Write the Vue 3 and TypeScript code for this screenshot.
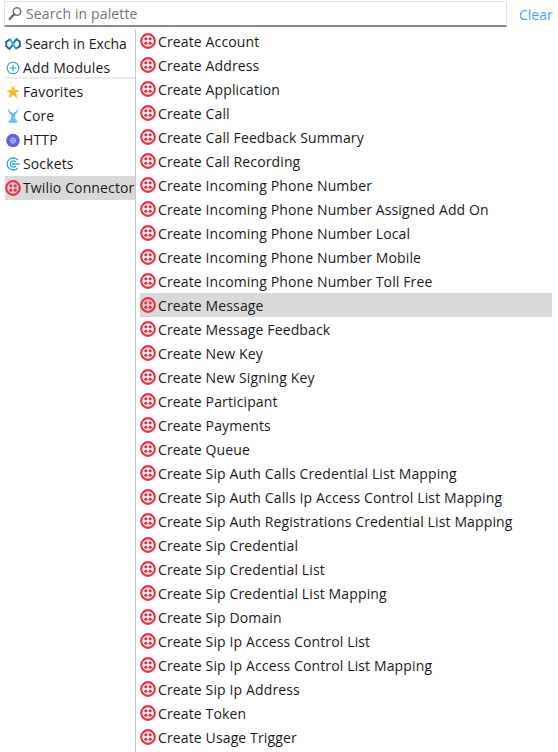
<script setup lang="ts">
const ops: string[] = [
  'Create Account','Create Address','Create Application','Create Call','Create Call Feedback Summary','Create Call Recording',
  'Create Incoming Phone Number','Create Incoming Phone Number Assigned Add On','Create Incoming Phone Number Local','Create Incoming Phone Number Mobile','Create Incoming Phone Number Toll Free',
  'Create Message','Create Message Feedback','Create New Key','Create New Signing Key','Create Participant','Create Payments','Create Queue',
  'Create Sip Auth Calls Credential List Mapping','Create Sip Auth Calls Ip Access Control List Mapping','Create Sip Auth Registrations Credential List Mapping',
  'Create Sip Credential','Create Sip Credential List','Create Sip Credential List Mapping','Create Sip Domain','Create Sip Ip Access Control List','Create Sip Ip Access Control List Mapping','Create Sip Ip Address','Create Token','Create Usage Trigger'
]
</script>

<template>
  <div class="page">
    <header class="top">
      <div class="search">
        <svg class="glass" width="14" height="15" viewBox="0 0 14 15" fill="none">
          <circle cx="9" cy="5.5" r="3.7" stroke="#777" stroke-width="1.6" />
          <path d="M6.2 8.3 1.6 13" stroke="#666" stroke-width="2.2" stroke-linecap="round" />
        </svg>
        <span>Search in palette</span>
      </div>
      <a class="clear">Clear</a>
    </header>
    <div class="body">
      <aside class="side">
        <div class="sgroup">
          <div class="srow exch">
            <svg width="16" height="14" viewBox="0 0 16 14" fill="none">
              <path d="M5.500 2 1.200 4.800v4.400L4.500 12 7.500 8" stroke="#1b6f96" stroke-width="2" stroke-linejoin="round" />
              <path d="M10.500 12l4.300-2.800V4.800L11.500 2 8.500 6" stroke="#1b6f96" stroke-width="2" stroke-linejoin="round" />
              <path d="M5 2l6 10" stroke="#27b5d8" stroke-width="2.200" />
            </svg>
            <span class="clip">Search in Excha</span>
          </div>
          <div class="srow">
            <svg width="14" height="14" viewBox="0 0 14 14" fill="none">
              <circle cx="7" cy="7" r="5.8" stroke="#2f9fe0" stroke-width="1.1" />
              <path d="M7 3.8v6.4M3.8 7h6.4" stroke="#2f9fe0" stroke-width="1.1" />
            </svg>
            <span>Add Modules</span>
          </div>
        </div>
        <div class="sgroup">
          <div class="srow">
            <svg width="14" height="14" viewBox="0 0 14 14"><path d="M7 .4 9 5h5L10 8l1.500 5.400L7 10.300l-4.500 3.100L4 8 0 5h5z" fill="#f8b92b" /></svg>
            <span>Favorites</span>
          </div>
          <div class="srow">
            <svg class="core" width="14" height="16" viewBox="0 0 13 16">
              <path d="M1 0C1.500 4 3.500 6 4.500 7L4.500 10C4 11.500 2.500 13 1.500 13.500 3 15.500 10 15.500 11.500 13.500 10.500 13 9 11.500 8.500 10L8.500 7C9.500 6 11.500 4 12 0 10.500 2.500 8.500 4.500 6.500 5 4.500 4.500 2.500 2.500 1 0z" fill="#62c6ee" />
            </svg>
            <span>Core</span>
          </div>
          <div class="srow">
            <svg width="15" height="15" viewBox="0 0 15 15">
              <circle cx="7.500" cy="7.500" r="7.300" fill="#5f63e6" />
              <circle cx="7.500" cy="7.500" r="2.800" fill="none" stroke="#c5c7f7" stroke-width="1" />
              <path d="M4.700 7.500h5.600M7.500 4.700v5.600" stroke="#c5c7f7" stroke-width=".8" />
            </svg>
            <span>HTTP</span>
          </div>
          <div class="srow">
            <svg width="14" height="14" viewBox="0 0 14 14" fill="none">
              <path d="M11.800 3.200A6 6 0 1 0 11.800 10.800" stroke="#2aa5d8" stroke-width="1.300" />
              <path d="M10 5a3.200 3.200 0 1 0 0 4" stroke="#2aa5d8" stroke-width="1.300" />
              <circle cx="7" cy="7" r="1.100" fill="#2aa5d8" /><path d="M7 7h7" stroke="#2aa5d8" stroke-width="1.200" />
            </svg>
            <span>Sockets</span>
          </div>
          <div class="srow selected twl">
            <svg class="tw" viewBox="0 0 16 16" fill="none">
              <circle cx="8" cy="8" r="6.800" stroke="#f22f46" stroke-width="2.200" />
              <circle cx="5.800" cy="5.800" r="1.650" fill="#f22f46" /><circle cx="10.200" cy="5.800" r="1.650" fill="#f22f46" />
              <circle cx="5.800" cy="10.200" r="1.650" fill="#f22f46" /><circle cx="10.200" cy="10.200" r="1.650" fill="#f22f46" />
            </svg>
            <span>Twilio Connector</span>
          </div>
        </div>
      </aside>
      <ul class="list">
        <li v-for="op in ops" :key="op" class="row" :class="{ selected: op === 'Create Message' }">
          <svg class="tw" viewBox="0 0 16 16" fill="none">
            <circle cx="8" cy="8" r="6.800" stroke="#f22f46" stroke-width="2.200" />
            <circle cx="5.800" cy="5.800" r="1.650" fill="#f22f46" /><circle cx="10.200" cy="5.800" r="1.650" fill="#f22f46" />
            <circle cx="5.800" cy="10.200" r="1.650" fill="#f22f46" /><circle cx="10.200" cy="10.200" r="1.650" fill="#f22f46" />
          </svg>
          <span>{{ op }}</span>
        </li>
      </ul>
    </div>
  </div>
</template>

<style>
html, body { margin: 0; background: #fff; overflow: hidden; }
</style>

<style scoped>
.page {
  width: 558px;
  height: 752px;
  overflow: hidden;
  background: #fff;
  color: #1a1a1a;
  font-family: "Open Sans", "Liberation Sans", sans-serif;
  font-size: 14px;
  letter-spacing: 0.13px;
}
.top { display: flex; align-items: center; padding: 1px 0 0 4px; height: 26px; }
.search {
  box-sizing: border-box;
  width: 503px;
  height: 26px;
  border: 1px solid #e2e2e2;
  border-bottom: 2px solid #8a8a8a;
  display: flex;
  align-items: center;
  gap: 4px;
  padding-left: 3px;
  color: #757575;
}
.clear { margin-left: 12px; color: #4d9fff; letter-spacing: 0; }
.body { display: flex; margin-top: 2px; }
.side { box-sizing: border-box; height: 723px; margin-left: 5px; width: 131px; border-right: 1px solid #c8c8c8; padding-top: 3px; }
.sgroup:first-child { box-sizing: border-box; height: 47px; border-bottom: 2px solid #ececec; margin-bottom: 1px; }
.srow { height: 24px; display: flex; align-items: center; gap: 3px; white-space: nowrap; overflow: hidden; }
.srow span { margin-bottom: 2px; }
.srow span.clip { letter-spacing: 0; }
.srow svg { flex: none; width: 14px; margin-left: 1px; }
.srow svg.core { height: 16px; margin-left: 1px; }
.srow.exch svg { width: 16px; margin-left: 0; }
.srow.exch { gap: 4px; }
.srow.selected { background: #d9d9d9; }
.srow.twl svg.tw { width: 16px; height: 16px; margin-left: 0; }
.srow.twl { gap: 2px; }
.tw { width: 16px; height: 16px; flex: none; }
.list { list-style: none; margin: 0; padding: 0 6px 0 4px; flex: 1; min-width: 0; }
.row { height: 24px; display: flex; align-items: center; gap: 2px; white-space: nowrap; }
.row.selected { background: #d9d9d9; }
</style>
